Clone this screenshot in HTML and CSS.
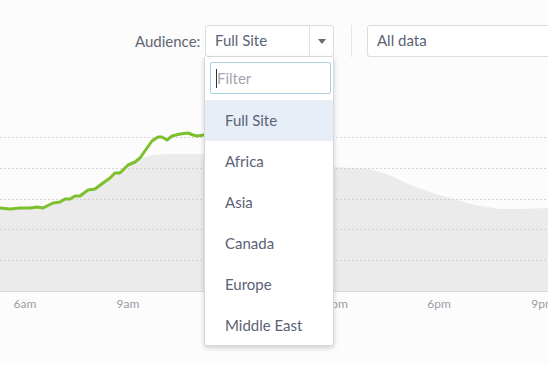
FILE: index.html
```html
<!DOCTYPE html>
<html>
<head>
<meta charset="utf-8">
<link rel="stylesheet" href="styles.css">
</head>
<body>
<div class="page">
  <div class="toolbar">
    <span class="label">Audience:</span>
    <div class="select-wrap">
      <div class="select">
        <span class="select-value">Full Site</span>
        <span class="select-btn"><span class="caret"></span></span>
      </div>
      <div class="dropdown">
        <div class="filter-box"><div class="filter"><span class="cursor"></span>Filter</div></div>
        <ul class="options">
          <li class="option active">Full Site</li>
          <li class="option">Africa</li>
          <li class="option">Asia</li>
          <li class="option">Canada</li>
          <li class="option">Europe</li>
          <li class="option">Middle East</li>
        </ul>
      </div>
    </div>
    <span class="sep"></span>
    <div class="data-box">All data</div>
  </div>
  <svg class="chart" width="548" height="308" viewBox="0 57 548 308">
    <path class="area" d="M0 209 L10 209 L20 208 L37 207 L53 204 L65 200 L80 196 L95 189 L110 178 L120 173 L128 166 L140 159 L153 155 L170 154 L200 154 L260 156 L335 167 L370 169 L387 174 L410 185 L433 193 L453 199 L475 205 L500 209 L520 209 L548 208 L548 291 L0 291 Z"/>
    <g class="grid">
      <line x1="0" y1="137.5" x2="548" y2="137.5"/>
      <line x1="0" y1="168.5" x2="548" y2="168.5"/>
      <line x1="0" y1="199.5" x2="548" y2="199.5"/>
      <line x1="0" y1="229.5" x2="548" y2="229.5"/>
      <line x1="0" y1="260.5" x2="548" y2="260.5"/>
    </g>
    <line class="axis" x1="0" y1="291.5" x2="548" y2="291.5"/>
    <path class="line" d="M0 208 L10 209 L20 208 L30 208 L37 207 L43 208 L53 203 L60 202 L65 199 L70 199 L75 196 L80 196 L88 190 L95 189 L103 183 L110 178 L115 173 L120 173 L128 165 L135 162 L140 158 L147 148 L152 141 L158 137 L162 137 L167 140 L172 136 L180 134 L188 133 L193 135 L197 136 L204 135"/>
    <g class="ticks">
      <text x="25" y="307.5">6am</text>
      <text x="128" y="307.5">9am</text>
      <text x="232" y="307.5">12pm</text>
      <text x="336" y="307.5">3pm</text>
      <text x="439" y="307.5">6pm</text>
      <text x="543" y="307.5">9pm</text>
    </g>
  </svg>
</div>
</body>
</html>
```
FILE: styles.css
```css
html, body {
  margin: 0;
  padding: 0;
  background: #fcfcfc;
}
body {
  font-family: "Lato", "Open Sans", sans-serif;
  color: #5a6275;
  overflow: hidden;
  width: 548px;
  height: 365px;
}
.page {
  width: 548px;
  height: 365px;
  overflow: hidden;
}
.toolbar {
  display: flex;
  align-items: center;
  padding: 25px 0 0 135px;
  height: 32px;
  white-space: nowrap;
}
.label {
  flex: none;
  font-size: 15px;
  color: #5f6572;
  margin-right: 5px;
  width: 65px;
}
.select-wrap {
  flex: none;
  position: relative;
  width: 129px;
  height: 32px;
}
.select {
  box-sizing: border-box;
  display: flex;
  width: 129px;
  height: 32px;
  border: 1px solid #dcdcdc;
  border-radius: 3px;
  background: #fff;
}
.select-value {
  flex: 1;
  padding-left: 9px;
  line-height: 29px;
  font-size: 15px;
  color: #5a6275;
}
.select-btn {
  width: 23px;
  border-left: 1px solid #e0e0e0;
  display: flex;
  align-items: center;
  justify-content: center;
}
.caret {
  width: 0;
  height: 0;
  border-left: 4px solid transparent;
  border-right: 4px solid transparent;
  border-top: 5px solid #656a72;
}
.dropdown {
  position: absolute;
  left: -1px;
  top: 32px;
  width: 130px;
  height: 289px;
  box-sizing: border-box;
  background: #fff;
  border: 1px solid #d8d8d8;
  border-top: none;
  border-radius: 0 0 3px 3px;
  box-shadow: 0 2px 5px rgba(0, 0, 0, 0.18);
  z-index: 2;
}
.filter-box {
  padding: 5px 2px 6px 5px;
}
.filter {
  box-sizing: border-box;
  height: 32px;
  width: 121px;
  border: 1px solid #a9d0e4;
  border-radius: 2px;
  padding-left: 5px;
  font-size: 15px;
  line-height: 30px;
  color: #a3a7ad;
  display: flex;
  align-items: center;
}
.cursor {
  width: 1px;
  height: 19px;
  background: #333;
}
.options {
  list-style: none;
  margin: 0;
  padding: 0;
}
.option {
  height: 41px;
  line-height: 41px;
  padding-left: 20px;
  font-size: 15px;
  color: #5a6275;
}
.option.active {
  background: #e7eef8;
}
.sep {
  flex: none;
  width: 1px;
  height: 32px;
  background: #e6e6e6;
  margin: 0 15px 0 17px;
}
.data-box {
  box-sizing: border-box;
  flex: none;
  width: 200px;
  height: 32px;
  border: 1px solid #dcdcdc;
  border-radius: 3px;
  background: #fff;
  padding-left: 9px;
  line-height: 29px;
  font-size: 15px;
  color: #5a6275;
}
.chart {
  display: block;
}
.area {
  fill: #ebebeb;
}
.grid line {
  stroke: #d2d2d2;
  stroke-width: 1;
  stroke-dasharray: 2 2;
}
.axis {
  stroke: #d9d9d9;
  stroke-width: 1;
}
.line {
  fill: none;
  stroke: #7cc02c;
  stroke-width: 3;
  stroke-linejoin: round;
  stroke-linecap: round;
}
.ticks text {
  font-family: "Lato", "Open Sans", sans-serif;
  font-size: 12px;
  fill: #999ea6;
  text-anchor: middle;
}
```
